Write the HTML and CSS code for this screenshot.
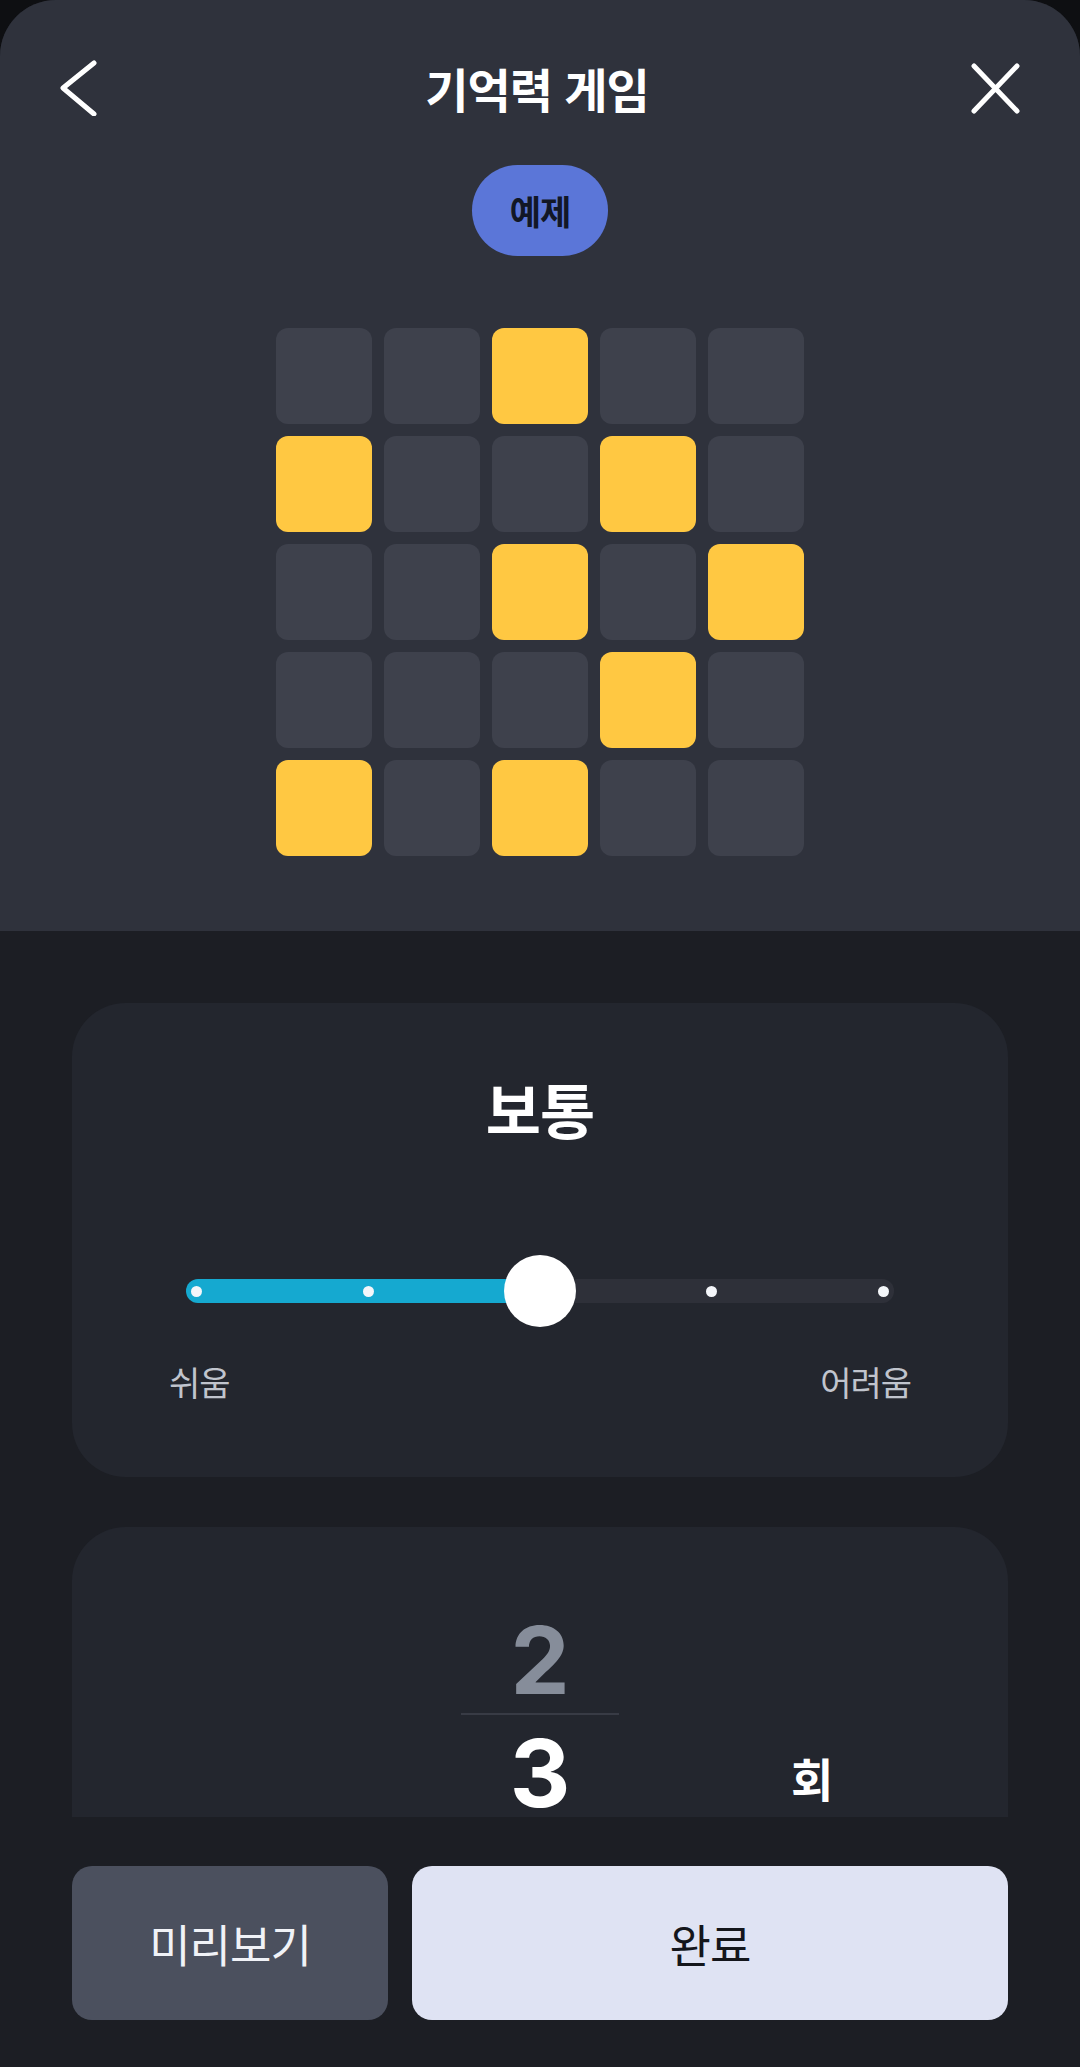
FILE: index.html
```html
<!DOCTYPE html>
<html lang="ko">
<head>
<meta charset="utf-8">
<title>기억력 게임</title>
<link rel="stylesheet" href="styles.css">
</head>
<body>
<div class="sheet">
  <section class="top">
    <header class="bar">
      <button class="icon-btn" aria-label="뒤로">
        <svg width="56" height="56" viewBox="0 0 56 56"><path d="M43 3 L12 28 L43 54" fill="none" stroke="#fff" stroke-width="5" stroke-linecap="round" stroke-linejoin="round"/></svg>
      </button>
      <h1 class="title">기억력 게임</h1>
      <button class="icon-btn" aria-label="닫기">
        <svg width="56" height="56" viewBox="0 0 56 56"><path d="M7 6 L50 51 M50 6 L7 51" fill="none" stroke="#fff" stroke-width="5" stroke-linecap="round"/></svg>
      </button>
    </header>
    <div class="badge">예제</div>
    <div class="board">
      <span class="cell"></span><span class="cell"></span><span class="cell on"></span><span class="cell"></span><span class="cell"></span>
      <span class="cell on"></span><span class="cell"></span><span class="cell"></span><span class="cell on"></span><span class="cell"></span>
      <span class="cell"></span><span class="cell"></span><span class="cell on"></span><span class="cell"></span><span class="cell on"></span>
      <span class="cell"></span><span class="cell"></span><span class="cell"></span><span class="cell on"></span><span class="cell"></span>
      <span class="cell on"></span><span class="cell"></span><span class="cell on"></span><span class="cell"></span><span class="cell"></span>
    </div>
  </section>
  <main class="scroll">
    <section class="card level">
      <h2 class="level-name">보통</h2>
      <div class="slider">
        <div class="track" style="--fill:50%">
          <span class="dot"></span><span class="dot"></span><span class="dot"></span><span class="dot"></span><span class="dot"></span>
        </div>
        <span class="knob"></span>
      </div>
      <div class="labels"><span>쉬움</span><span>어려움</span></div>
    </section>
    <section class="card picker">
      <div class="spacer"></div>
      <div class="wheel">
        <div class="num dim">2</div>
        <div class="sep"></div>
        <div class="num cur">3</div>
      </div>
      <div class="unit">회</div>
    </section>
  </main>
  <footer class="actions">
    <button class="btn secondary">미리보기</button>
    <button class="btn primary">완료</button>
  </footer>
</div>
</body>
</html>
```
FILE: styles.css
```css
* { box-sizing: border-box; }
html, body {
  margin: 0;
  padding: 0;
  background: #0e0f12;
}
body {
  font-family: "Noto Sans CJK KR", "Noto Sans", sans-serif;
  color: #fff;
}
.sheet {
  width: 1080px;
  height: 2067px;
  background: #1c1e24;
  border-radius: 56px 56px 0 0;
  overflow: hidden;
}
.top {
  background: #2f323c;
  height: 931px;
  padding-top: 28px;
}
.bar {
  display: grid;
  grid-template-columns: 56px 1fr 56px;
  align-items: center;
  height: 120px;
  padding: 0 57px 0 51px;
}
.icon-btn {
  width: 56px;
  height: 56px;
  padding: 0;
  border: none;
  background: none;
  display: flex;
}
.title {
  margin: 0;
  text-align: center;
  font-size: 47px;
  font-weight: 700;
  line-height: 60px;
  letter-spacing: -1px;
}
.badge {
  width: 136px;
  height: 91px;
  margin: 17px auto 0;
  border-radius: 46px;
  background: #5b76d8;
  color: #121726;
  font-size: 34px;
  font-weight: 700;
  display: flex;
  align-items: center;
  justify-content: center;
  letter-spacing: -1px;
}
.board {
  display: grid;
  grid-template-columns: repeat(5, 96px);
  grid-auto-rows: 96px;
  gap: 12px;
  justify-content: center;
  margin-top: 72px;
}
.cell {
  border-radius: 12px;
  background: #3e414c;
}
.cell.on {
  background: #ffc842;
}
.scroll {
  height: 886px;
  overflow: hidden;
  padding: 72px 72px 0;
}
.card {
  background: #23262e;
  border-radius: 54px;
}
.level {
  height: 474px;
  padding-top: 70px;
  display: flex;
  flex-direction: column;
  align-items: center;
}
.level-name {
  margin: 0;
  font-size: 60px;
  line-height: 70px;
  font-weight: 700;
  letter-spacing: -1px;
}
.slider {
  position: relative;
  width: 708px;
  height: 72px;
  margin-top: 112px;
}
.track {
  height: 24px;
  margin-top: 24px;
  border-radius: 12px;
  background: linear-gradient(to right, #15a9d0 var(--fill), #2e3039 var(--fill));
  display: flex;
  align-items: center;
  justify-content: space-between;
  padding: 0 5px;
}
.dot {
  width: 11px;
  height: 11px;
  border-radius: 50%;
  background: #f4f6fa;
}
.knob {
  position: absolute;
  left: 50%;
  top: 50%;
  width: 72px;
  height: 72px;
  border-radius: 50%;
  background: #fff;
  transform: translate(-50%, -50%);
}
.labels {
  width: 742px;
  margin-top: 35px;
  display: flex;
  justify-content: space-between;
  font-size: 34px;
  line-height: 40px;
  color: #c0c4cd;
  letter-spacing: -1px;
}
.picker {
  margin-top: 50px;
  height: 420px;
  display: grid;
  grid-template-columns: 1fr 158px 1fr;
}
.wheel {
  padding-top: 80px;
  display: flex;
  flex-direction: column;
  align-items: center;
}
.num {
  font-family: "Inter", "Roboto", sans-serif;
  font-weight: 700;
  font-size: 94px;
  line-height: 106px;
  height: 106px;
}
.num.dim {
  color: #868d9a;
}
.num.cur {
  color: #fff;
  line-height: 76px;
  height: 76px;
  margin-top: 20px;
}
.sep {
  width: 158px;
  height: 2px;
  background: #383b45;
}
.unit {
  padding: 222px 0 0 172px;
  font-size: 46px;
  line-height: 56px;
  font-weight: 700;
}
.actions {
  display: flex;
  gap: 24px;
  padding: 49px 72px 0;
}
.btn {
  height: 154px;
  border: none;
  border-radius: 20px;
  font-family: "Noto Sans CJK KR", "Noto Sans", sans-serif;
  font-size: 45px;
  font-weight: 400;
  letter-spacing: -1px;
}
.btn.secondary {
  width: 316px;
  background: #4b505e;
  color: #f0f2f7;
}
.btn.primary {
  flex: 1;
  background: #dfe3f3;
  color: #14161b;
}
```
